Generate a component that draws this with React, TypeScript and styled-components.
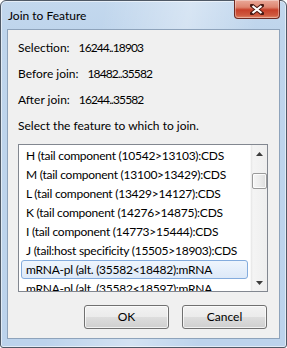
import React from "react";
import styled, { createGlobalStyle } from "styled-components";

const Global = createGlobalStyle`
  html, body { margin: 0; padding: 0; background: #ffffff; }
  body { font-family: Lato, "Open Sans", sans-serif; }
  * { box-sizing: border-box; }
`;

const Window = styled.div`
  width: 287px;
  height: 348px;
  border: 1px solid #4f5966;
  border-radius: 6px 6px 3px 3px;
  padding: 0 6px 8px 6px;
  display: flex;
  flex-direction: column;
  background:
    linear-gradient(100deg, rgba(255,255,255,0) 30%, rgba(255,255,255,0.35) 55%, rgba(255,255,255,0) 75%),
    linear-gradient(180deg, #c3d8ee 0px, #bfd5ec 28px, #bcd3ec 100%);
  box-shadow: inset 0 0 0 1px rgba(255,255,255,0.55);
  font-family: Lato, "Open Sans", sans-serif;
  font-size: 12px;
  color: #000;
`;

const TitleBar = styled.div`
  height: 28px;
  display: flex;
  align-items: flex-start;
  justify-content: space-between;
`;

const Title = styled.div`
  padding: 7px 0 0 1px;
  font-size: 12px;
  line-height: 16px;
  color: #000;
`;

const CloseButton = styled.div`
  width: 46px;
  height: 19px;
  margin-top: -1px;
  border: 1px solid #6f2a22;
  border-top: none;
  border-radius: 0 0 4px 4px;
  background: linear-gradient(180deg, #eaa99a 0%, #de8570 40%, #c8402a 55%, #cf5a40 85%, #e28a6c 100%);
  box-shadow: inset 0 0 0 1px rgba(255,255,255,0.35);
  display: flex;
  align-items: center;
  justify-content: center;
`;

const Client = styled.div`
  flex: 1;
  border: 1px solid #8ea3bb;
  background: #f0f0f0;
  padding: 5px 11px 0 10px;
  display: flex;
  flex-direction: column;
`;

const InfoRow = styled.div`
  height: 26px;
  display: flex;
  align-items: center;
  white-space: pre;
  line-height: 16px;
`;

const Value = styled.span`
  margin-left: 9px;
  letter-spacing: -0.9px;
`;

const ListBox = styled.div`
  margin-top: 5px;
  height: 148px;
  border: 1px solid #828790;
  background: #fff;
  display: flex;
  overflow: hidden;
`;

const Rows = styled.div`
  flex: 1;
  padding: 1px 2px 0 2px;
  overflow: hidden;
`;

const Row = styled.div<{ $selected?: boolean }>`
  height: 19px;
  padding: 0 4px;
  border: 1px solid ${(p) => (p.$selected ? "#84acdd" : "transparent")};
  border-radius: 3px;
  background: ${(p) =>
    p.$selected ? "linear-gradient(180deg, #eef5fd 0%, #dde9f8 100%)" : "transparent"};
  display: flex;
  align-items: center;
  white-space: pre;
  line-height: 16px;
  letter-spacing: -0.25px;
  color: #000;
`;

const ScrollBar = styled.div`
  width: 17px;
  display: flex;
  flex-direction: column;
  background: linear-gradient(90deg, #e6e6e6 0px, #f4f4f4 2px, #eeeeee 100%);
  border-left: 1px solid #f8f8f8;
`;

const Arrow = styled.div`
  height: 17px;
  display: flex;
  align-items: center;
  justify-content: center;
`;

const Track = styled.div`
  flex: 1;
  padding-top: 11px;
  display: flex;
  flex-direction: column;
  align-items: center;
`;

const Thumb = styled.div`
  width: 15px;
  height: 16px;
  border: 1px solid #9a9a9a;
  border-radius: 2px;
  background: linear-gradient(90deg, #f6f6f6 0%, #ececec 50%, #dcdcdc 100%);
  box-shadow: inset 0 0 0 1px rgba(255,255,255,0.8);
`;

const ButtonRow = styled.div`
  margin-top: 13px;
  display: flex;
  justify-content: flex-end;
  gap: 13px;
  padding-right: 1px;
`;

const Button = styled.div`
  width: 85px;
  height: 24px;
  border: 1px solid #707070;
  border-radius: 3px;
  background: linear-gradient(180deg, #f2f2f2 0%, #ebebeb 50%, #dddddd 51%, #cfcfcf 100%);
  box-shadow: inset 0 0 0 1px rgba(255,255,255,0.7);
  display: flex;
  align-items: center;
  justify-content: center;
  line-height: 16px;
  color: #000;
`;

const items = [
  "H (tail component (10542>13103):CDS",
  "M (tail component (13100>13429):CDS",
  "L (tail component (13429>14127):CDS",
  "K (tail component (14276>14875):CDS",
  "I (tail component (14773>15444):CDS",
  "J (tail:host specificity (15505>18903):CDS",
  "mRNA-pl (alt. (35582<18482):mRNA",
  "mRNA-pl (alt. (35582<18597):mRNA",
];

const info = [
  ["Selection:", "16244..18903"],
  ["Before join:", "18482..35582"],
  ["After join:", "16244..35582"],
];

export default function App() {
  return (
    <>
      <Global />
      <Window>
        <TitleBar>
          <Title>Join to Feature</Title>
          <CloseButton>
            <svg width="14" height="11" viewBox="0 0 14 11">
              <path
                d="M2 1.5 L12 9.5 M12 1.5 L2 9.5"
                stroke="#4a1a14"
                strokeWidth="4"
                strokeLinecap="square"
                fill="none"
              />
              <path
                d="M2.5 2 L11.5 9 M11.5 2 L2.5 9"
                stroke="#ffffff"
                strokeWidth="2.2"
                fill="none"
              />
            </svg>
          </CloseButton>
        </TitleBar>
        <Client>
          {info.map(([label, value]) => (
            <InfoRow key={label}>
              {label}
              <Value>{value}</Value>
            </InfoRow>
          ))}
          <InfoRow>Select the feature to which to join.</InfoRow>
          <ListBox>
            <Rows>
              {items.map((t, i) => (
                <Row key={i} $selected={i === 6}>
                  {t}
                </Row>
              ))}
            </Rows>
            <ScrollBar>
              <Arrow>
                <svg width="7" height="4" viewBox="0 0 7 4">
                  <path d="M0 4 L3.5 0 L7 4 Z" fill="#3c3c3c" />
                </svg>
              </Arrow>
              <Track>
                <Thumb />
              </Track>
              <Arrow>
                <svg width="7" height="4" viewBox="0 0 7 4">
                  <path d="M0 0 L3.5 4 L7 0 Z" fill="#3c3c3c" />
                </svg>
              </Arrow>
            </ScrollBar>
          </ListBox>
          <ButtonRow>
            <Button>OK</Button>
            <Button>Cancel</Button>
          </ButtonRow>
        </Client>
      </Window>
    </>
  );
}
